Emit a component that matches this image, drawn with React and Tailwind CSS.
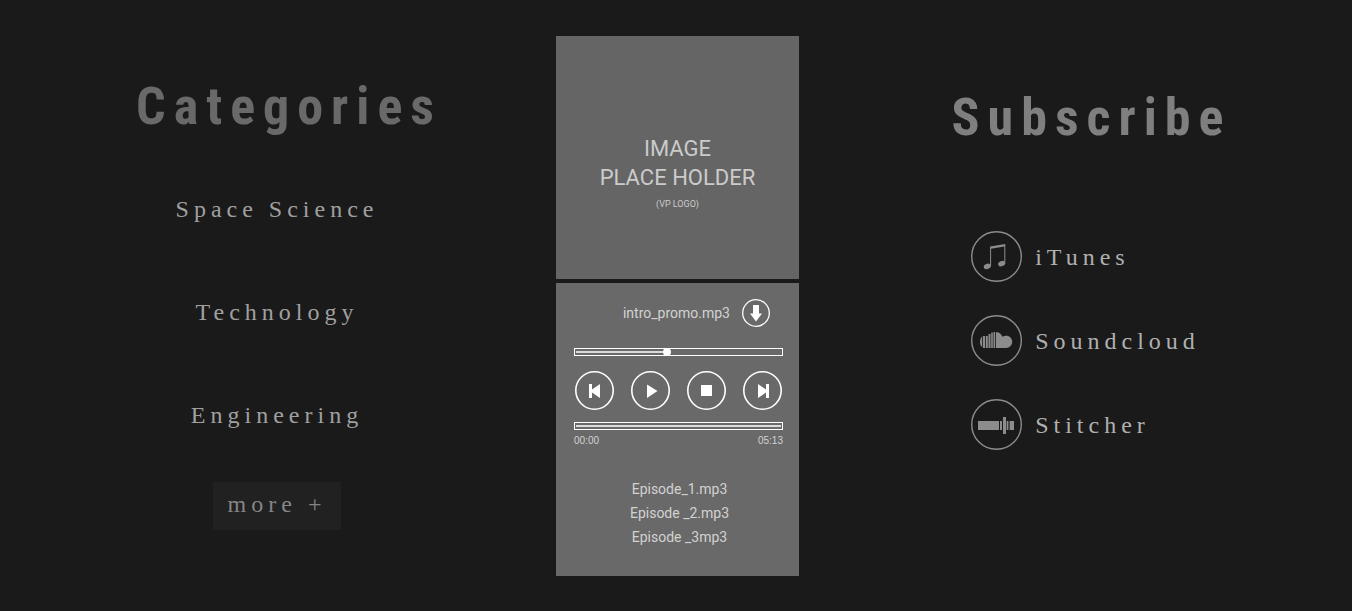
const categories = ["Space Science", "Technology", "Engineering"];
const episodes = ["Episode_1.mp3", "Episode _2.mp3", "Episode _3mp3"];

const headingStyle =
  "font-['Roboto_Condensed','Roboto',sans-serif] text-[52px] leading-[60px] font-bold tracking-[8px]";
const serifStyle =
  "font-['Liberation_Serif',serif] text-2xl leading-8 tracking-[5px]";

function ItunesIcon() {
  return (
    <svg viewBox="0 0 51 51" className="size-[51px] shrink-0" fill="#8c8c8c" aria-hidden="true">
      <circle cx="25.5" cy="25.5" r="24.8" fill="none" stroke="#8c8c8c" strokeWidth="1.4" />
      <ellipse cx="16.3" cy="35.3" rx="3.6" ry="2.6" transform="rotate(-22 16.3 35.3)" />
      <ellipse cx="30.7" cy="32.6" rx="3.6" ry="2.6" transform="rotate(-22 30.7 32.6)" />
      <path d="M19.1 15.4 34.3 13v19.6h-1V15.6l-13.2 2.1v17.6h-1z" />
    </svg>
  );
}

function SoundcloudIcon() {
  return (
    <svg viewBox="0 0 51 51" className="size-[51px] shrink-0" fill="#8c8c8c" aria-hidden="true">
      <circle cx="25.5" cy="25.5" r="24.8" fill="none" stroke="#8c8c8c" strokeWidth="1.4" />
      <path d="M11.2 21.5v10.800C9.600 31.200 9 29.200 9 27s.6-4.200 2.200-5.500z" />
      <path d="M12 20.900h2v12h-2zM14.800 20.900h2v12h-2zM17.500 19h2v13.900h-2zM20.200 17.600h1.600v15.300h-1.600zM22.500 17.100h1.600v15.800h-1.600z" />
      <path d="M24.900 17.200c3.100-.5 5.400 1.600 6.400 4.500 1.200-.7 2.400-1 3.900-1 3.500 0 6 2.700 6 6.100s-2.600 6.100-6 6.100H24.900z" />
    </svg>
  );
}

function StitcherIcon() {
  return (
    <svg viewBox="0 0 51 51" className="size-[51px] shrink-0" fill="#8c8c8c" aria-hidden="true">
      <circle cx="25.5" cy="25.5" r="24.8" fill="none" stroke="#8c8c8c" strokeWidth="1.4" />
      <path d="M7 22h21v9H7zM29 22h2v9h-2zM32 18h3v17h-3zM35.6 22h1.8v9h-1.8zM38.6 22H43v9h-4.4z" />
    </svg>
  );
}

const services = [
  { name: "iTunes", Icon: ItunesIcon },
  { name: "Soundcloud", Icon: SoundcloudIcon },
  { name: "Stitcher", Icon: StitcherIcon },
];

const controls = [
  { label: "Previous", path: "M14 13h3v5.5L25 13v14l-8-5.5V27h-3z" },
  { label: "Play", path: "M16 13.5 26.5 20 16 27z" },
  { label: "Stop", path: "M14 14h11v11H14z" },
  { label: "Next", path: "M15 13l8 5.5V13h3v14h-3v-5.500L15 27z" },
];

function Bar({ label, value, thumb }) {
  return (
    <input
      type="range"
      aria-label={label}
      min="0"
      max="100"
      defaultValue={value}
      style={{ backgroundSize: `${value}% 2px` }}
      className={`block h-2 w-full appearance-none border border-white bg-[linear-gradient(#dcdcdc,#dcdcdc)] bg-left bg-no-repeat bg-origin-content px-px [&::-webkit-slider-thumb]:size-2 [&::-webkit-slider-thumb]:appearance-none [&::-webkit-slider-thumb]:rounded-full [&::-webkit-slider-thumb]:bg-white ${
        thumb ? "" : "[&::-webkit-slider-thumb]:opacity-0"
      }`}
    />
  );
}

function Categories() {
  return (
    <section className="flex flex-col items-center pt-[77px] pr-0.5">
      <h2 className={`${headingStyle} pl-6 text-[#696969]`}>Categories</h2>
      <ul className="mt-14 flex flex-col items-center gap-[71px]">
        {categories.map((name) => (
          <li key={name}>
            <a href="#" className={`${serifStyle} block text-[#a0a0a0]`}>{name}</a>
          </li>
        ))}
      </ul>
      <button type="button" className={`${serifStyle} mt-[51px] h-12 w-32 bg-[#212121] pb-1 text-[#858585]`}>
        more +
      </button>
    </section>
  );
}

function Player() {
  return (
    <section className="flex flex-col gap-1 pt-9 font-['Roboto',sans-serif]">
      <div className="flex aspect-square flex-col items-center justify-center bg-[#656565] pt-[30px] text-center text-[#cbcbcb]">
        <p className="text-[22px] leading-[29px]">
          IMAGE
          <br />
          PLACE HOLDER
        </p>
        <p className="mt-1 text-[9px] leading-4">(VP LOGO)</p>
      </div>
      <div className="bg-[#696969] px-[18px] pt-4 pb-[27px] text-[#d2d2d2]">
        <div className="flex items-center justify-end gap-3 pr-[11px]">
          <span className="text-sm leading-6">intro_promo.mp3</span>
          <button type="button" aria-label="Download">
            <svg viewBox="0 0 28 28" className="block size-7" aria-hidden="true">
              <circle cx="14" cy="14" r="13.3" fill="none" stroke="#fff" strokeWidth="1.3" />
              <path d="M11 6h6v8.500h3L14 22.500 8 14.500h3z" fill="#fff" />
            </svg>
          </button>
        </div>
        <div className="mt-[21px] -mr-0.5">
          <Bar label="Position" value={44} thumb />
          <div className="mt-[15px] flex gap-[17px] pl-px">
            {controls.map(({ label, path }) => (
              <button key={label} type="button" aria-label={label}>
                <svg viewBox="0 0 39 39" className="block size-[39px]" aria-hidden="true">
                  <circle cx="19.5" cy="19.5" r="18.7" fill="none" stroke="#fff" strokeWidth="1.6" />
                  <path d={path} fill="#fff" />
                </svg>
              </button>
            ))}
          </div>
          <div className="mt-3">
            <Bar label="Buffered" value={100} />
          </div>
          <div className="mt-[3px] flex justify-between font-['Liberation_Sans',sans-serif] text-[10px] leading-4">
            <span>00:00</span>
            <span>05:13</span>
          </div>
        </div>
        <ul className="mt-7 flex flex-col items-center pl-1 text-sm leading-6">
          {episodes.map((name) => (
            <li key={name}>
              <a href="#" className="block leading-6">{name}</a>
            </li>
          ))}
        </ul>
      </div>
    </section>
  );
}

function Subscribe() {
  return (
    <section className="flex flex-col items-center pt-[88px]">
      <h2 className={`${headingStyle} pl-8 text-[#7f7f7f]`}>Subscribe</h2>
      <ul className="mt-[83px] flex flex-col gap-[33px] pl-5">
        {services.map(({ name, Icon }) => (
          <li key={name}>
            <a href="#" className={`${serifStyle} flex items-center gap-[13px] text-[#b0b0b0]`}>
              <Icon />
              {name}
            </a>
          </li>
        ))}
      </ul>
    </section>
  );
}

export default function App() {
  return (
    <main className="grid min-h-screen grid-cols-[556fr_243px_553fr] items-start bg-[#1a1a1a] pb-[35px]">
      <Categories />
      <Player />
      <Subscribe />
    </main>
  );
}
